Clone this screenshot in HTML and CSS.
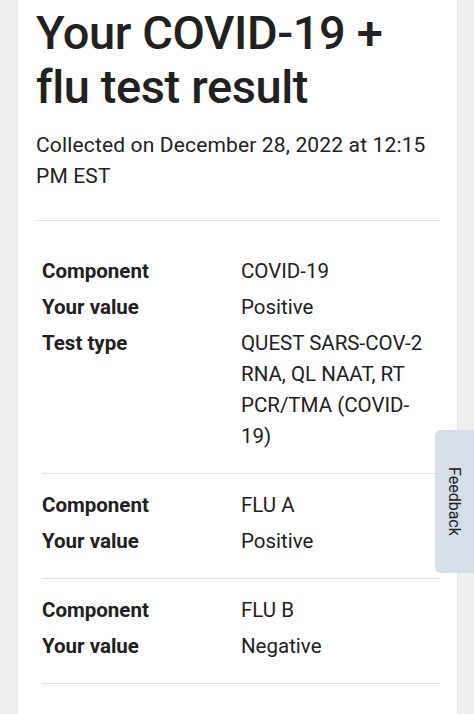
FILE: index.html
```html
<!DOCTYPE html>
<html lang="en">
<head>
  <meta charset="UTF-8" />
  <meta name="viewport" content="width=device-width, initial-scale=1" />
  <title>Your COVID-19 + flu test result</title>
  <link rel="stylesheet" href="styles.css">
</head>
<body>
  <div class="card">
    <h1>Your COVID-19 + flu test result</h1>
    <p class="collected">Collected on December 28, 2022 at 12:15 PM EST</p>
    <div class="divider"></div>

    <dl class="result">
      <dt>Component</dt>
      <dd>COVID-19</dd>
      <dt>Your value</dt>
      <dd>Positive</dd>
      <dt>Test type</dt>
      <dd>QUEST SARS-COV-2 RNA, QL NAAT, RT PCR/TMA (COVID-19)</dd>
    </dl>

    <dl class="result">
      <dt>Component</dt>
      <dd>FLU A</dd>
      <dt>Your value</dt>
      <dd>Positive</dd>
    </dl>

    <dl class="result">
      <dt>Component</dt>
      <dd>FLU B</dd>
      <dt>Your value</dt>
      <dd>Negative</dd>
    </dl>
  </div>

  <button type="button" class="feedback">Feedback</button>
</body>
</html>
```

FILE: styles.css
```css
body {
  font-family: Roboto, 'Liberation Sans', sans-serif;
  margin: 0;
  background: #efefef;
  color: #212121;
}
.card {
  margin: 0 17px 0 18px;
  padding: 6px 17px 30px 18px;
  background: #fff;
  box-shadow: 0 0 2px rgba(0,0,0,0.08);
}
h1 {
  margin: 0;
  font-size: 47px;
  line-height: 54px;
  font-weight: 500;
  letter-spacing: -0.4px;
}
.collected {
  margin: 16px 0 28px;
  font-size: 21px;
  line-height: 31px;
  letter-spacing: 0.15px;
}
.divider {
  height: 1px;
  background: #e3e3e3;
  margin-bottom: 19px;
}
.result {
  display: grid;
  grid-template-columns: 1fr 1fr;
  row-gap: 5px;
  margin: 0 0 0 6px;
  padding: 16px 0 21px;
  border-bottom: 1px solid #e3e3e3;
  font-size: 20.5px;
  line-height: 31px;
}
.result dt {
  font-weight: 700;
}
.result dd {
  margin: 0;
  padding-right: 6px;
}
.feedback {
  position: fixed;
  right: 0;
  top: 430px;
  width: 39px;
  height: 143px;
  padding: 0;
  border: none;
  border-radius: 6px 0 0 6px;
  background: #d5dee9;
  color: #222;
  font-family: inherit;
  font-size: 16px;
  writing-mode: vertical-rl;
  text-align: center;
}
```
